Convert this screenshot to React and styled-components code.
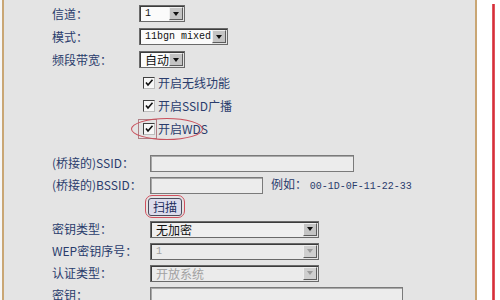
import React from "react";
import styled, { createGlobalStyle } from "styled-components";

const GlobalStyle = createGlobalStyle`
  html, body {
    margin: 0;
    padding: 0;
    background: #fff;
  }
  body {
    width: 500px;
    height: 300px;
    overflow: hidden;
    font-family: "Noto Sans CJK SC", "Liberation Sans", sans-serif;
    font-size: 12px;
  }
`;

const Frame = styled.div`
  display: flex;
  width: 500px;
  height: 300px;
  background: #fff;
`;

const Strip = styled.div`
  flex: none;
  width: ${(p) => p.$w}px;
  background: ${(p) => p.$c};
`;

const RedRule = styled.div`
  flex: none;
  width: 3px;
  margin-top: 4px;
  background: linear-gradient(to right, #e46a70, #d62f3a 50%, #e46a70);
`;

const Panel = styled.div`
  flex: 1;
  background: #e4e4e4;
  padding: 2px 0 0 48px;
  overflow: hidden;
`;

const Section = styled.div`
  display: flex;
  flex-direction: column;
  margin-bottom: ${(p) => p.$gap || 0}px;
`;

const Row = styled.div`
  display: grid;
  grid-template-columns: ${(p) => p.$label}px auto;
  align-items: center;
  height: ${(p) => p.$h}px;
`;

const Label = styled.span`
  color: #2a3c6c;
  white-space: nowrap;
  line-height: 14px;
`;

const Control = styled.div`
  display: flex;
  align-items: center;
  position: relative;
`;

const Mono = styled.span`
  font-family: "Liberation Mono", "DejaVu Sans Mono", monospace;
  font-size: 10px;
`;

const SelectBox = styled.div`
  display: flex;
  width: ${(p) => p.$w}px;
  height: 17px;
  box-sizing: border-box;
  border: 1px solid #6a6a6a;
  box-shadow: inset 1px 1px 0 #3c3c3c;
`;

const SelectValue = styled.div`
  flex: 1;
  display: flex;
  align-items: center;
  padding-left: 4px;
  margin: 1px 0 0 1px;
  background: ${(p) => (p.$disabled ? "#ebebeb" : p.$bg || "#fbfbfb")};
  color: ${(p) => (p.$disabled ? "#a2a2a2" : "#111")};
  line-height: 14px;
  white-space: nowrap;
`;

const ArrowButton = styled.div`
  flex: none;
  width: 14px;
  display: flex;
  align-items: center;
  justify-content: center;
  margin: 1px 1px 1px 0;
  background: ${(p) => (p.$disabled ? "#cfcfcf" : "#c4c4c4")};
  border-top: 1px solid #efefef;
  border-left: 1px solid #efefef;
  border-right: 1px solid #5c5c5c;
  border-bottom: 1px solid #5c5c5c;
  box-sizing: border-box;

  &::after {
    content: "";
    border-left: 3px solid transparent;
    border-right: 3px solid transparent;
    border-top: 4px solid ${(p) => (p.$disabled ? "#9a9a9a" : "#111")};
  }
`;

const Select = ({ w, value, disabled, bg, mono }) => (
  <SelectBox $w={w}>
    <SelectValue $disabled={disabled} $bg={bg}>
      {mono ? <Mono>{value}</Mono> : value}
    </SelectValue>
    <ArrowButton $disabled={disabled} />
  </SelectBox>
);

const TextInput = styled.div`
  width: ${(p) => p.$w}px;
  height: 17px;
  box-sizing: border-box;
  background: #ececec;
  border: 1px solid #7a7a7a;
  box-shadow: inset 1px 1px 0 #a8a8a8;
`;

const CheckLabel = styled.label`
  position: relative;
  display: flex;
  align-items: center;
  gap: 3px;
  padding-left: 4px;
  color: #2a3c6c;
  line-height: 14px;
  white-space: nowrap;
`;

const Box = styled.span`
  display: inline-flex;
  width: 12px;
  height: 12px;
  box-sizing: border-box;
  background: #f7f7f7;
  border-top: 1px solid #404040;
  border-left: 1px solid #404040;
  border-right: 1px solid #bdbdbd;
  border-bottom: 1px solid #bdbdbd;
`;

const Ellipse = styled.span`
  position: absolute;
  left: -8px;
  top: 50%;
  width: 70px;
  height: 20px;
  transform: translateY(-50%);
  border: 1px solid #c9505c;
  border-radius: 50%;
  pointer-events: none;
`;

const FocusSquare = styled.span`
  position: absolute;
  left: -1px;
  top: -3px;
  width: 17px;
  height: 18px;
  border: 1px solid rgba(140, 60, 70, 0.6);
  pointer-events: none;
`;

const Check = ({ text, circled }) => (
  <CheckLabel>
    <Box>
      <svg width="10" height="10" viewBox="0 0 10 10">
        <path d="M2 4.5 L4 7 L8.5 1.8" fill="none" stroke="#111" strokeWidth="1.6" />
      </svg>
    </Box>
    {text}
    {circled && (
      <>
        <FocusSquare />
        <Ellipse />
      </>
    )}
  </CheckLabel>
);

const ScanButton = styled.button`
  position: relative;
  margin-left: -2px;
  width: 34px;
  height: 18px;
  padding: 0;
  font: inherit;
  color: #1f2d5c;
  background: #dcdcec;
  border: 1px solid #4c4c5c;
  border-radius: 3px;
  line-height: 14px;

  &::after {
    content: "";
    position: absolute;
    inset: -4px -4px -3px -4px;
    border: 1px solid #d0505e;
    border-radius: 7px;
  }
`;

const Hint = styled.span`
  margin-left: 8px;
  color: #2a3c6c;
  white-space: nowrap;
  line-height: 14px;
`;

export default function App() {
  return (
    <>
      <GlobalStyle />
      <Frame>
        <Strip $w={2} $c="#f6f6f6" />
        <Strip $w={2} $c="#c9a674" />
        <Panel>
          <Section $gap={12}>
            <Row $label={87} $h={23}>
              <Label>信道：</Label>
              <Control><Select w={46} value="1" mono /></Control>
            </Row>
            <Row $label={87} $h={23}>
              <Label>模式：</Label>
              <Control><Select w={89} value="11bgn mixed" mono /></Control>
            </Row>
            <Row $label={87} $h={23}>
              <Label>频段带宽：</Label>
              <Control><Select w={46} value="自动" /></Control>
            </Row>
            <Row $label={87} $h={23}>
              <span />
              <Control><Check text="开启无线功能" /></Control>
            </Row>
            <Row $label={87} $h={23}>
              <span />
              <Control><Check text="开启SSID广播" /></Control>
            </Row>
            <Row $label={87} $h={23}>
              <span />
              <Control><Check text="开启WDS" circled /></Control>
            </Row>
          </Section>
          <Section>
            <Row $label={98} $h={22}>
              <Label>(桥接的)SSID：</Label>
              <Control><TextInput $w={204} /></Control>
            </Row>
            <Row $label={98} $h={22}>
              <Label>(桥接的)BSSID：</Label>
              <Control>
                <TextInput $w={113} />
                <Hint>例如： <Mono>00-1D-0F-11-22-33</Mono></Hint>
              </Control>
            </Row>
            <Row $label={98} $h={22}>
              <span />
              <Control><ScanButton>扫描</ScanButton></Control>
            </Row>
            <Row $label={98} $h={22}>
              <Label>密钥类型：</Label>
              <Control><Select w={169} value="无加密" bg="#efefef" /></Control>
            </Row>
            <Row $label={98} $h={22}>
              <Label>WEP密钥序号：</Label>
              <Control><Select w={169} value="1" disabled mono /></Control>
            </Row>
            <Row $label={98} $h={22}>
              <Label>认证类型：</Label>
              <Control><Select w={169} value="开放系统" disabled /></Control>
            </Row>
            <Row $label={98} $h={22}>
              <Label>密钥：</Label>
              <Control><TextInput $w={253} /></Control>
            </Row>
          </Section>
        </Panel>
        <Strip $w={2} $c="#c9a674" />
        <Strip $w={15} $c="#ffffff" />
        <RedRule />
        <Strip $w={5} $c="#ffffff" />
      </Frame>
    </>
  );
}
